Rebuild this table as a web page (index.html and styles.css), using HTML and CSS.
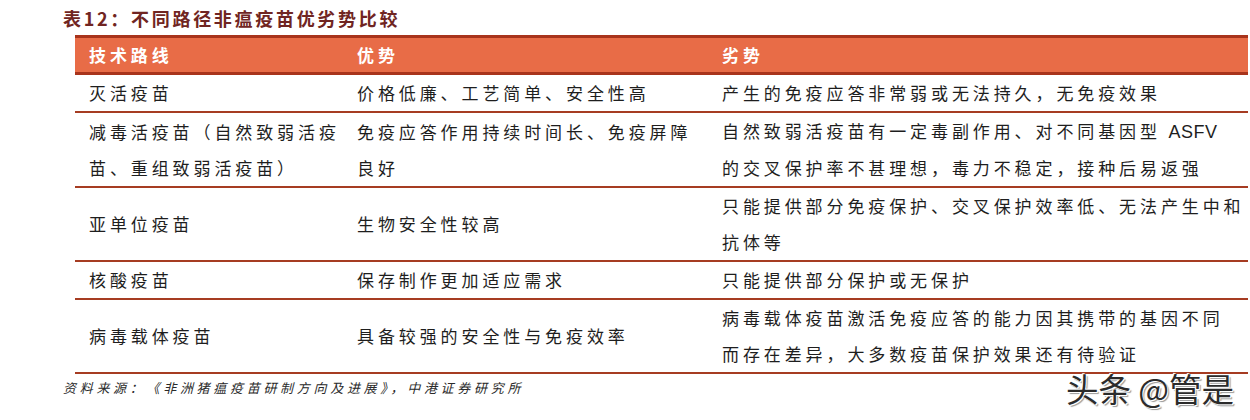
FILE: index.html
```html
<!DOCTYPE html>
<html lang="zh-CN">
<head>
<meta charset="utf-8">
<title>表12</title>
<link rel="stylesheet" href="styles.css">
</head>
<body>
<div class="page">
  <h1 class="title">表12：不同路径非瘟疫苗优劣势比较</h1>
  <table class="cmp">
    <colgroup>
      <col class="c1"><col class="c2"><col class="c3">
    </colgroup>
    <thead>
      <tr><th>技术路线</th><th>优势</th><th>劣势</th></tr>
    </thead>
    <tbody>
      <tr class="r1">
        <td>灭活疫苗</td>
        <td>价格低廉、工艺简单、安全性高</td>
        <td>产生的免疫应答非常弱或无法持久，无免疫效果</td>
      </tr>
      <tr class="r2">
        <td>减毒活疫苗（自然致弱活疫<br>苗、重组致弱活疫苗）</td>
        <td>免疫应答作用持续时间长、免疫屏障<br>良好</td>
        <td>自然致弱活疫苗有一定毒副作用、对不同基因型 <span class="lat">ASFV</span><br>的交叉保护率不甚理想，毒力不稳定，接种后易返强</td>
      </tr>
      <tr class="r2">
        <td>亚单位疫苗</td>
        <td>生物安全性较高</td>
        <td>只能提供部分免疫保护、交叉保护效率低、无法产生中和<br>抗体等</td>
      </tr>
      <tr class="r1">
        <td>核酸疫苗</td>
        <td>保存制作更加适应需求</td>
        <td>只能提供部分保护或无保护</td>
      </tr>
      <tr class="r2">
        <td>病毒载体疫苗</td>
        <td>具备较强的安全性与免疫效率</td>
        <td>病毒载体疫苗激活免疫应答的能力因其携带的基因不同<br>而存在差异，大多数疫苗保护效果还有待验证</td>
      </tr>
    </tbody>
  </table>
  <p class="source">资料来源：《非洲猪瘟疫苗研制方向及进展》，中港证券研究所</p>
  <div class="watermark">头条 @管是</div>
</div>
</body>
</html>
```

FILE: styles.css
```css
html, body {
  margin: 0;
  padding: 0;
  background: #ffffff;
}

.page {
  position: relative;
  width: 1250px;
  height: 420px;
  overflow: hidden;
  font-family: "Noto Sans CJK SC", "Noto Sans", sans-serif;
  color: #1e1e1e;
}

.title {
  margin: 0;
  padding: 6px 0 0 63px;
  height: 29px;
  font-size: 18px;
  line-height: 24px;
  font-weight: 700;
  letter-spacing: 2.7px;
  color: #702522;
}

.cmp {
  margin-left: 75px;
  width: 1173px;
  border-collapse: collapse;
  table-layout: fixed;
  font-size: 17px;
  letter-spacing: 3.9px;
}

.c1 { width: 268px; }
.c2 { width: 365px; }
.c3 { width: 540px; }

.cmp th {
  background: #e86c47;
  color: #ffffff;
  font-weight: 700;
  text-align: left;
  padding: 0 0 0 14px;
  height: 34px;
  line-height: 34px;
  border-top: 3px solid #a8341c;
  border-bottom: 3px solid #a8341c;
}

.cmp td {
  padding: 0 0 0 14px;
  line-height: 36px;
  vertical-align: middle;
  white-space: nowrap;
  border-bottom: 2px solid #a63c22;
}

.cmp .r1 td { height: 36px; }
.cmp .r2 td { height: 72px; }

.lat {
  font-family: "Liberation Sans", Arial, sans-serif;
  letter-spacing: 0.5px;
  font-size: 18px;
}

.source {
  margin: 2px 0 0 63px;
  font-size: 13px;
  line-height: 24px;
  font-style: italic;
  letter-spacing: 3.7px;
  color: #2a2a2a;
}

.watermark {
  position: absolute;
  left: 1066px;
  top: 366px;
  font-size: 32.5px;
  line-height: 44px;
  color: #2b2b2b;
  letter-spacing: 0;
  text-shadow: 1px 1px 0 #ffffff, -1px -1px 0 #ffffff, 2px 2px 1px #999999;
}
```
